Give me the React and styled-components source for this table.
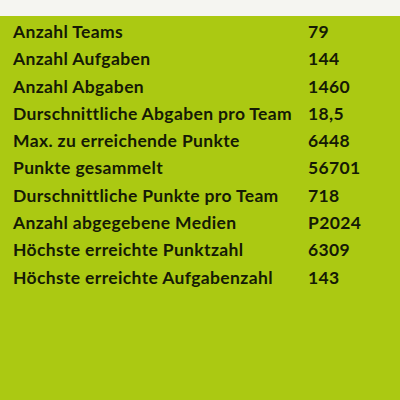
import React from "react";
import styled, { createGlobalStyle } from "styled-components";

const GlobalStyle = createGlobalStyle`
  html, body {
    margin: 0;
    padding: 0;
    background: #abc912;
  }
`;

const Page = styled.div`
  width: 400px;
  height: 400px;
  display: flex;
  flex-direction: column;
  background: #abc912;
  font-family: Lato, "Open Sans", sans-serif;
`;

const TopStrip = styled.div`
  height: 16px;
  background: #f5f5f1;
`;

const StatsGrid = styled.div`
  display: grid;
  grid-template-columns: 295px auto;
  justify-content: start;
  padding: 2px 13px 0;
`;

const Cell = styled.div`
  font-size: 17.5px;
  font-weight: 700;
  letter-spacing: 0.35px;
  line-height: 27.3px;
  color: #151a05;
  white-space: nowrap;
`;

const stats = [
  ["Anzahl Teams", "79"],
  ["Anzahl Aufgaben", "144"],
  ["Anzahl Abgaben", "1460"],
  ["Durschnittliche Abgaben pro Team", "18,5"],
  ["Max. zu erreichende Punkte", "6448"],
  ["Punkte gesammelt", "56701"],
  ["Durschnittliche Punkte pro Team", "718"],
  ["Anzahl abgegebene Medien", "P2024"],
  ["Höchste erreichte Punktzahl", "6309"],
  ["Höchste erreichte Aufgabenzahl", "143"],
];

export default function App() {
  return (
    <>
      <GlobalStyle />
      <Page>
        <TopStrip />
        <StatsGrid>
          {stats.map(([label, value]) => (
            <React.Fragment key={label}>
              <Cell>{label}</Cell>
              <Cell>{value}</Cell>
            </React.Fragment>
          ))}
        </StatsGrid>
      </Page>
    </>
  );
}
